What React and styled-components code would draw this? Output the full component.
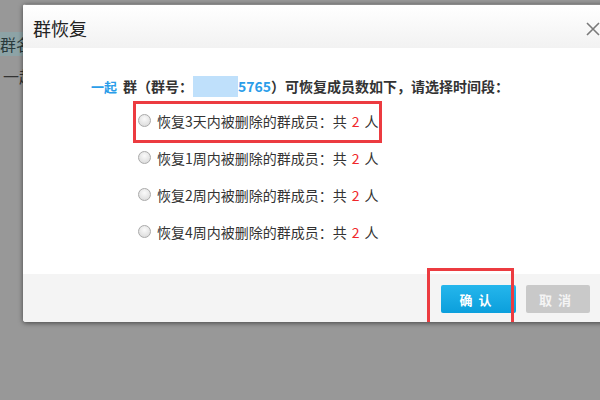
import React from "react";
import styled, { createGlobalStyle } from "styled-components";

const Global = createGlobalStyle`
  html, body { margin: 0; padding: 0; }
  body {
    width: 600px; height: 400px; overflow: hidden;
    background: #989898;
    font-family: "Noto Sans CJK SC", "Liberation Sans", sans-serif;
  }
`;

const Page = styled.div`
  position: relative;
  width: 600px;
  height: 400px;
  overflow: hidden;
  background: #989898;
`;

const BgList = styled.div`
  display: flex;
  flex-direction: column;
  padding-top: 32px;
`;

const BgRow = styled.div`
  width: 23px;
  overflow: hidden;
  height: 24px;
  line-height: 24px;
  font-size: 16px;
  color: ${p => (p.$active ? "#2a3a3c" : "#333")};
  background: ${p => (p.$active ? "#8da3a6" : "transparent")};
  padding-left: ${p => (p.$active ? "0" : "3px")};
  margin-bottom: 8px;
  white-space: nowrap;
`;

const Dialog = styled.div`
  position: absolute;
  left: 23px;
  top: 4px;
  width: 600px;
  height: 318px;
  display: flex;
  flex-direction: column;
  background: #fff;
  border-radius: 3px;
  box-shadow: 0 1px 5px rgba(0, 0, 0, 0.55);
  overflow: hidden;
`;

const TitleBar = styled.div`
  height: 44px;
  flex: none;
  display: flex;
  align-items: center;
  justify-content: space-between;
  padding: 0 11px 0 10px;
  background: linear-gradient(#ffffff, #f2f2f2);
  border-top: 1px solid #8a8a8a;
  box-sizing: border-box;
`;

const Title = styled.div`
  font-size: 18px;
  color: #222;
  line-height: 20px;
  margin-top: 2px;
`;

const Close = styled.svg`
  width: 14px;
  height: 14px;
  margin-right: 12px;
  margin-top: 4px;
`;

const Body = styled.div`
  flex: 1;
  padding: 28px 0 0 68px;
  box-sizing: border-box;
`;

const Intro = styled.div`
  display: flex;
  align-items: center;
  height: 20px;
  font-size: 14px;
  font-weight: 700;
  color: #333;
  white-space: nowrap;
`;

const Blue = styled.span`
  color: #2b9de9;
  font-size: ${p => p.$size || "14px"};
  margin-right: ${p => p.$gap || "0"};
`;

const Redact = styled.span`
  display: inline-block;
  width: 45px;
  height: 21px;
  background: #bfe0fb;
  filter: blur(0.6px);
`;

const Options = styled.div`
  display: flex;
  flex-direction: column;
  align-items: flex-start;
  padding-left: 47px;
  margin-top: 6px;
`;

const Option = styled.label`
  position: relative;
  display: flex;
  align-items: center;
  height: 37px;
  font-size: 14px;
  color: #333;
  white-space: nowrap;
  &::after {
    content: "";
    display: ${p => (p.$marked ? "block" : "none")};
    position: absolute;
    top: -1px;
    left: -5px;
    right: -3px;
    bottom: -4px;
    border: 3px solid #ec3b40;
  }
`;

const Radio = styled.span`
  width: 11px;
  height: 11px;
  border-radius: 50%;
  border: 1px solid #aaa;
  background: radial-gradient(circle at 50% 35%, #fafafa, #d6d6d6);
  margin-right: 6px;
  flex: none;
`;

const Red = styled.span`
  color: #f0262b;
  margin: 0 5px;
`;

const Footer = styled.div`
  height: 48px;
  flex: none;
  display: flex;
  align-items: flex-start;
  gap: 10px;
  padding: 11px 0 0 418px;
  background: #f4f4f4;
  box-sizing: border-box;
`;

const Button = styled.button`
  position: relative;
  height: 28px;
  width: ${p => (p.$primary ? "75px" : "64px")};
  border: none;
  border-radius: 2px;
  font-family: inherit;
  font-size: 13px;
  font-weight: 700;
  letter-spacing: 6px;
  padding-left: 6px;
  color: ${p => (p.$primary ? "#fff" : "#f4f4f4")};
  background: ${p => (p.$primary ? "linear-gradient(#25b6ec, #0b9fdc)" : "#c9c9c9")};
  &::after {
    content: "";
    display: ${p => (p.$marked ? "block" : "none")};
    position: absolute;
    top: -17px;
    left: -14px;
    right: 2px;
    bottom: -13px;
    border: 3px solid #ec3b40;
  }
`;

const options = ["3天", "1周", "2周", "4周"];

export default function App() {
  return (
    <Page>
      <Global />
      <BgList>
        <BgRow $active>群名称</BgRow>
        <BgRow>一起群</BgRow>
      </BgList>
      <Dialog>
        <TitleBar>
          <Title>群恢复</Title>
          <Close viewBox="0 0 14 14">
            <path d="M1 1L13 13M13 1L1 13" stroke="#7a7a7a" strokeWidth="1.6" fill="none" />
          </Close>
        </TitleBar>
        <Body>
          <Intro>
            <Blue $size="13px" $gap="6px">一起</Blue>群（群号：<Redact />
            <Blue>5765</Blue>）可恢复成员数如下，请选择时间段：
          </Intro>
          <Options>
            {options.map((o, i) => (
              <Option key={o} $marked={i === 0}>
                <Radio />
                恢复{o}内被删除的群成员：共<Red>2</Red>人
              </Option>
            ))}
          </Options>
        </Body>
        <Footer>
          <Button $primary $marked>确认</Button>
          <Button>取消</Button>
        </Footer>
      </Dialog>
    </Page>
  );
}
